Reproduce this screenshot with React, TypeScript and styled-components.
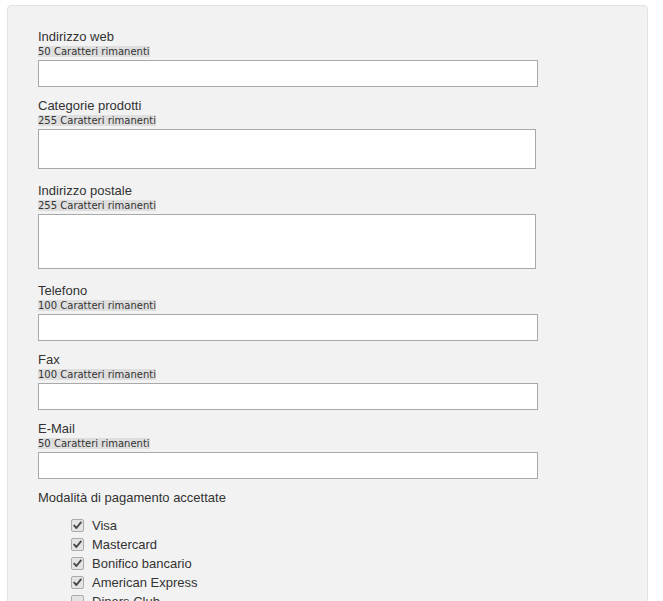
import * as React from "react";
import styled, { createGlobalStyle } from "styled-components";

const GlobalStyle = createGlobalStyle`
  html, body {
    margin: 0;
    padding: 0;
    background: #ffffff;
    overflow: hidden;
  }
`;

type Field = {
  label: string;
  max: number;
  kind: "input" | "area";
  height?: number;
};

const fields: Field[] = [
  { label: "Indirizzo web", max: 50, kind: "input" },
  { label: "Categorie prodotti", max: 255, kind: "area", height: 40 },
  { label: "Indirizzo postale", max: 255, kind: "area", height: 55 },
  { label: "Telefono", max: 100, kind: "input" },
  { label: "Fax", max: 100, kind: "input" },
  { label: "E-Mail", max: 50, kind: "input" }
];

const payments = [
  { name: "Visa", checked: true },
  { name: "Mastercard", checked: true },
  { name: "Bonifico bancario", checked: true },
  { name: "American Express", checked: true },
  { name: "Diners Club", checked: false }
];

const CheckMark = () => (
  <svg width="9" height="9" viewBox="0 0 9 9">
    <path
      d="M1.2 4.6 L3.4 7 L7.9 1.4"
      fill="none"
      stroke="#4a4a4a"
      strokeWidth="1.9"
      strokeLinecap="round"
      strokeLinejoin="round"
    />
  </svg>
);

export default function App() {
  return (
    <React.Fragment>
      <GlobalStyle />
      <Page>
        <Panel>
          {fields.map((f) => (
            <Group key={f.label} $area={f.kind === "area"}>
              <Label>{f.label}</Label>
              <Counter>{f.max} Caratteri rimanenti</Counter>
              {f.kind === "input" ? (
                <TextInput type="text" />
              ) : (
                <TextArea $height={f.height || 40} />
              )}
            </Group>
          ))}

          <Label>Modalità di pagamento accettate</Label>
          <PaymentList>
            {payments.map((p) => (
              <PaymentRow key={p.name}>
                <Box>{p.checked && <CheckMark />}</Box>
                <PaymentName>{p.name}</PaymentName>
              </PaymentRow>
            ))}
          </PaymentList>
        </Panel>
      </Page>
    </React.Fragment>
  );
}

const Page = styled.div`
  height: 601px;
  padding: 5px 15px 0 7px;
  box-sizing: border-box;
  font-family: "Liberation Sans", Arial, sans-serif;
  font-size: 13px;
  color: #333333;
`;

const Panel = styled.div`
  background: #f2f2f2;
  border: 1px solid #e2e2e2;
  border-radius: 4px;
  padding: 23px 0 40px 30px;
  min-height: 700px;
`;

const Group = styled.div<{ $area: boolean }>`
  margin-bottom: ${(p) => (p.$area ? 14 : 11)}px;
`;

const Label = styled.div`
  font-size: 13px;
  line-height: 15px;
  color: #333333;
  margin-bottom: 2px;
`;

const Counter = styled.div`
  width: fit-content;
  font-family: "DejaVu Sans", Verdana, sans-serif;
  font-size: 10px;
  line-height: 11px;
  color: #333333;
  background: #dedede;
`;

const TextInput = styled.input`
  display: block;
  margin: 3px 0 0;
  width: 500px;
  height: 27px;
  box-sizing: border-box;
  border: 1px solid #a9a9a9;
  background: #ffffff;
  padding: 2px 4px;
  font: 13px "Liberation Sans", Arial, sans-serif;
  outline: none;
`;

const TextArea = styled.textarea<{ $height: number }>`
  display: block;
  margin: 3px 0 0;
  width: 498px;
  height: ${(p) => p.$height}px;
  box-sizing: border-box;
  border: 1px solid #a9a9a9;
  background: #ffffff;
  resize: none;
  padding: 2px;
  font: 13px "Liberation Sans", Arial, sans-serif;
  outline: none;
`;

const PaymentList = styled.div`
  margin-top: 11px;
  padding-left: 33px;
`;

const PaymentRow = styled.div`
  display: flex;
  align-items: center;
  height: 19px;
`;

const Box = styled.span`
  width: 11px;
  height: 11px;
  border: 1px solid #ababab;
  border-radius: 2px;
  background: #e4e4e4;
  display: flex;
  align-items: center;
  justify-content: center;
  margin-right: 8px;
`;

const PaymentName = styled.span`
  font-size: 13px;
  line-height: 15px;
  color: #333333;
`;
